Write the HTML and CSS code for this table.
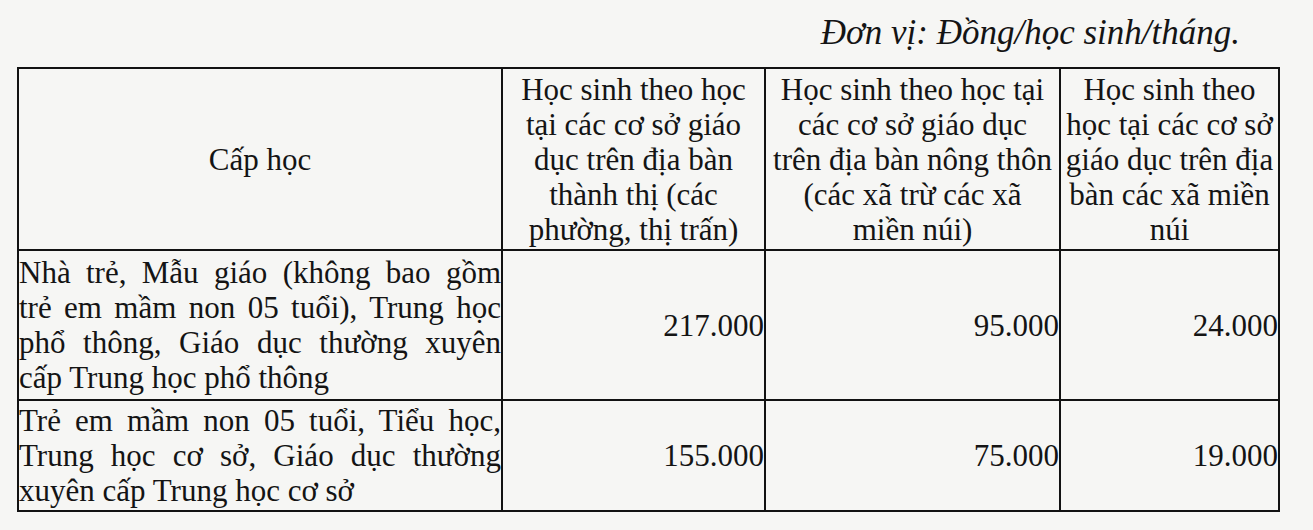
FILE: index.html
```html
<!DOCTYPE html>
<html lang="vi">
<head>
<meta charset="utf-8">
<title>Đơn vị: Đồng/học sinh/tháng</title>
<link rel="stylesheet" href="styles.css">
</head>
<body>
<div class="page">
  <p class="unit">Đơn vị: Đồng/học sinh/tháng.</p>
  <table class="fee">
    <colgroup>
      <col class="c1"><col class="c2"><col class="c3"><col class="c4">
    </colgroup>
    <thead>
      <tr class="head">
        <th>Cấp học</th>
        <th>Học sinh theo học<br>tại các cơ sở giáo<br>dục trên địa bàn<br>thành thị (các<br>phường, thị trấn)</th>
        <th>Học sinh theo học tại<br>các cơ sở giáo dục<br>trên địa bàn nông thôn<br>(các xã trừ các xã<br>miền núi)</th>
        <th>Học sinh theo<br>học tại các cơ sở<br>giáo dục trên địa<br>bàn các xã miền<br>núi</th>
      </tr>
    </thead>
    <tbody>
      <tr class="r1">
        <td class="level">
          <span class="jl">Nhà trẻ, Mẫu giáo (không bao gồm</span>
          <span class="jl">trẻ em mầm non 05 tuổi), Trung học</span>
          <span class="jl">phổ thông, Giáo dục thường xuyên</span>
          <span class="ll">cấp Trung học phổ thông</span>
        </td>
        <td class="num">217.000</td>
        <td class="num">95.000</td>
        <td class="num">24.000</td>
      </tr>
      <tr class="r2">
        <td class="level">
          <span class="jl">Trẻ em mầm non 05 tuổi, Tiểu học,</span>
          <span class="jl">Trung học cơ sở, Giáo dục thường</span>
          <span class="ll">xuyên cấp Trung học cơ sở</span>
        </td>
        <td class="num">155.000</td>
        <td class="num">75.000</td>
        <td class="num">19.000</td>
      </tr>
    </tbody>
  </table>
</div>
</body>
</html>
```

FILE: styles.css
```css
html, body {
  margin: 0;
  padding: 0;
  background: #f6f6f4;
}

body {
  font-family: "Liberation Serif", "Times New Roman", serif;
  color: #141414;
  width: 1313px;
  height: 530px;
  overflow: hidden;
}

.page {
  padding-top: 13px;
}

.unit {
  margin: 0 73px 14px 0;
  text-align: right;
  font-style: italic;
  font-size: 35px;
  line-height: 40px;
}

.fee {
  margin-left: 17px;
  width: 1261px;
  table-layout: fixed;
  border-collapse: collapse;
  font-size: 31px;
  line-height: 35px;
}

.c1 { width: 484px; }
.c2 { width: 263px; }
.c3 { width: 295px; }
.c4 { width: 219px; }

.fee th,
.fee td {
  border: 2px solid #121212;
  padding: 0;
  vertical-align: middle;
}

.fee th {
  font-weight: normal;
  text-align: center;
  white-space: nowrap;
}

.head { height: 182px; }
.r1 { height: 150px; }
.r2 { height: 111px; }

.level {
  padding: 0 2px 0 3px;
  vertical-align: top;
}

.jl,
.ll {
  display: block;
  white-space: nowrap;
}

.jl {
  white-space: normal;
  text-align: justify;
  text-align-last: justify;
}

.ll {
  text-align: left;
}

.num {
  text-align: right;
  padding-right: 1px;
}
```
